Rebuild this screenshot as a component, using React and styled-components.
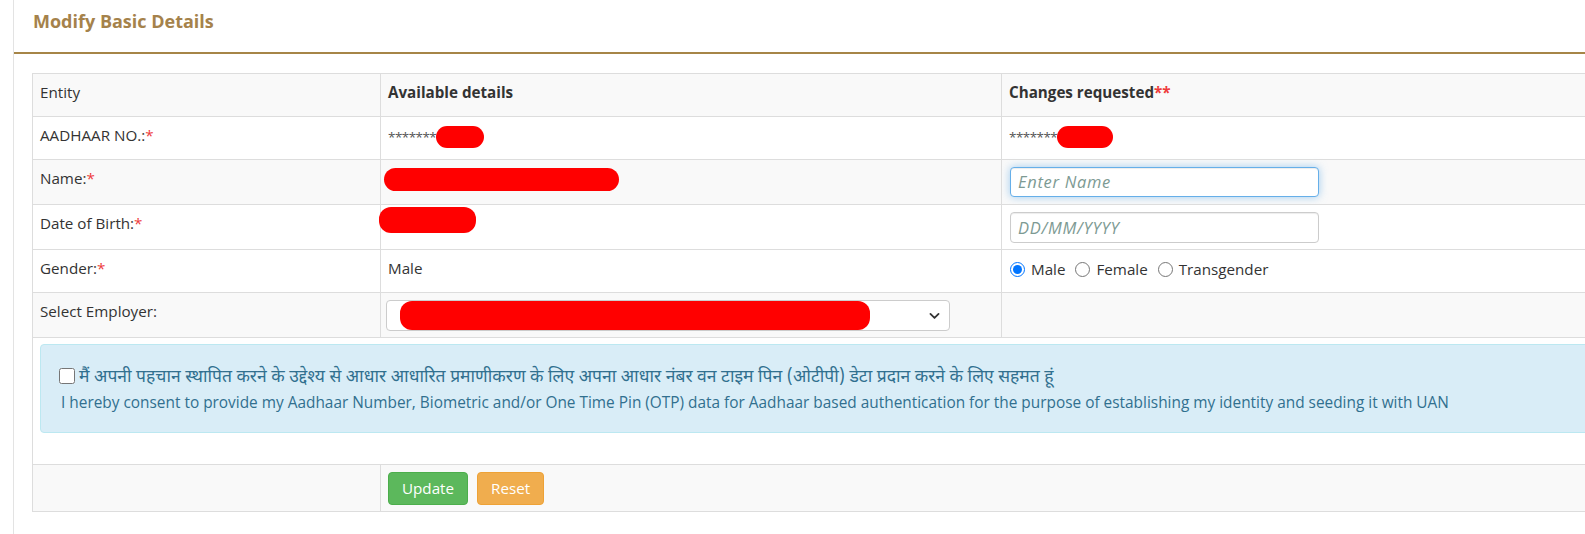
import React from 'react';
import styled, { createGlobalStyle } from 'styled-components';

const GlobalStyle = createGlobalStyle`
  body {
    margin: 0;
    background: #fff;
    font-family: "Open Sans", "Noto Sans", sans-serif;
    color: #333;
    overflow: hidden;
  }
`;

const Panel = styled.div`
  margin-left: 13px;
  min-height: 534px;
  border-left: 1px solid #e3e3e3;
`;

const PanelHeading = styled.div`
  height: 54px;
  box-sizing: border-box;
  padding: 9px 19px;
  border-bottom: 2px solid #a68547;
  color: #a5824b;
  font-size: 18px;
  font-weight: 700;
  line-height: 24px;
`;

const PanelBody = styled.div`
  padding: 19px 0 0 18px;
`;

const Table = styled.table`
  width: 1620px;
  table-layout: fixed;
  border-collapse: collapse;
  border: 1px solid #ddd;
  font-size: 15.2px;
`;

const Col = styled.col`
  width: ${p => p.$w}px;
`;

const Row = styled.tr`
  height: ${p => p.$h}px;
  background: ${p => (p.$shade ? '#f9f9f9' : '#fff')};
`;

const Cell = styled.td`
  border: 1px solid #ddd;
  padding: 7px 7px 0;
  line-height: 22px;
  vertical-align: top;
  font-weight: ${p => (p.$head ? 700 : 400)};
`;

const Req = styled.span`
  color: #ee3b3b;
`;

const Stars = styled.span`
  font-size: 13.4px;
  color: #555;
  letter-spacing: -0.5px;
  vertical-align: middle;
`;

const Redact = styled.span`
  display: inline-block;
  vertical-align: middle;
  width: ${p => p.$w}px;
  height: ${p => p.$h}px;
  margin-left: ${p => p.$dx || 0}px;
  position: relative;
  top: ${p => p.$dy || 0}px;
  background: #ff0000;
  border-radius: 12px;
`;

const TextInput = styled.input`
  display: block;
  box-sizing: border-box;
  width: 309px;
  height: ${p => p.$h || 30}px;
  margin: 0 0 0 1px;
  padding: 4px 7px;
  font-family: inherit;
  font-size: 15.2px;
  color: #555;
  border: 1px solid ${p => (p.$focus ? '#66afe9' : '#ccc')};
  border-radius: 4px;
  box-shadow: ${p => (p.$focus
    ? 'inset 0 1px 1px rgba(0,0,0,.075), 0 0 8px rgba(102,175,233,.6)'
    : 'inset 0 1px 1px rgba(0,0,0,.075)')};
  outline: none;

  &::placeholder {
    color: #7d9a93;
    font-style: italic;
    font-size: 16.5px;
    letter-spacing: 0.7px;
  }
`;

const RadioGroup = styled.div`
  display: flex;
  align-items: center;
  gap: 10px;
  padding: 1px 0 0 1px;
`;

const RadioLabel = styled.label`
  display: inline-flex;
  align-items: center;
  gap: 6px;
`;

const Radio = styled.input`
  margin: 0;
  width: 15px;
  height: 15px;
  accent-color: #0075ff;
`;

const SelectBox = styled.div`
  box-sizing: border-box;
  width: 564px;
  height: 31px;
  margin-left: -2px;
  border: 1px solid #ccc;
  border-radius: 4px;
  background: #fff;
  display: flex;
  align-items: center;
  justify-content: space-between;
  padding: 0 8px 0 13px;
`;

const Alert = styled.div`
  margin: -1px 0 31px;
  padding: 15px 15px 18px;
  background: #d9edf7;
  border: 1px solid #bce8f1;
  border-radius: 4px;
  color: #31708f;
`;

const ConsentLine = styled.label`
  display: flex;
  align-items: center;
  font-family: "Noto Sans Devanagari", "Lohit Devanagari", "Noto Sans", sans-serif;
  font-size: 17.5px;
  line-height: 32px;
`;

const HindiText = styled.span`
  line-height: 28px;
  padding-top: 4px;
`;

const Check = styled.input`
  margin: 0 4px 0 3px;
  width: 16px;
  height: 16px;
`;

const ConsentText = styled.div`
  padding-left: 5px;
  font-size: 15.4px;
  line-height: 22px;
`;

const ButtonRow = styled.div`
  display: flex;
  gap: 9px;
`;

const Button = styled.button`
  font-family: inherit;
  font-size: 15.2px;
  line-height: 19px;
  padding: 6px 13px;
  color: #fff;
  border-radius: 4px;
  border: 1px solid ${p => (p.$variant === 'warning' ? '#eea236' : '#4cae4c')};
  background: ${p => (p.$variant === 'warning' ? '#f0ad4e' : '#5cb85c')};
  cursor: pointer;
`;

const Chevron = () => (
  <svg width="13" height="13" viewBox="0 0 16 16" fill="none" stroke="#333" strokeWidth="2.2" strokeLinecap="round" strokeLinejoin="round">
    <path d="M3 6l5 5 5-5" />
  </svg>
);

export default function App() {
  return (
    <>
      <GlobalStyle />
      <Panel>
        <PanelHeading>Modify Basic Details</PanelHeading>
        <PanelBody>
          <Table>
            <colgroup>
              <Col $w={348} />
              <Col $w={621} />
              <Col $w={651} />
            </colgroup>
            <tbody>
              <Row $h={43} $shade>
                <Cell>Entity</Cell>
                <Cell $head>Available details</Cell>
                <Cell $head>Changes requested<Req>**</Req></Cell>
              </Row>
              <Row $h={43}>
                <Cell>AADHAAR NO.:<Req>*</Req></Cell>
                <Cell><Stars>*******</Stars><Redact $w={48} $h={22} /></Cell>
                <Cell><Stars>*******</Stars><Redact $w={56} $h={22} /></Cell>
              </Row>
              <Row $h={45} $shade>
                <Cell>Name:<Req>*</Req></Cell>
                <Cell><Redact $w={235} $h={23} $dx={-4} /></Cell>
                <Cell><TextInput $focus placeholder="Enter Name" /></Cell>
              </Row>
              <Row $h={45}>
                <Cell>Date of Birth:<Req>*</Req></Cell>
                <Cell><Redact $w={97} $h={26} $dx={-9} $dy={-5} /></Cell>
                <Cell><TextInput $h={31} placeholder="DD/MM/YYYY" /></Cell>
              </Row>
              <Row $h={43}>
                <Cell>Gender:<Req>*</Req></Cell>
                <Cell>Male</Cell>
                <Cell>
                  <RadioGroup>
                    <RadioLabel><Radio type="radio" name="g" defaultChecked />Male</RadioLabel>
                    <RadioLabel><Radio type="radio" name="g" />Female</RadioLabel>
                    <RadioLabel><Radio type="radio" name="g" />Transgender</RadioLabel>
                  </RadioGroup>
                </Cell>
              </Row>
              <Row $h={45} $shade>
                <Cell>Select Employer:</Cell>
                <Cell>
                  <SelectBox>
                    <Redact $w={470} $h={29} />
                    <Chevron />
                  </SelectBox>
                </Cell>
                <Cell />
              </Row>
              <Row>
                <Cell colSpan={3}>
                  <Alert>
                    <ConsentLine>
                      <Check type="checkbox" />
                      <HindiText>
                        मैं अपनी पहचान स्थापित करने के उद्देश्य से आधार आधारित प्रमाणीकरण के लिए अपना आधार नंबर वन टाइम पिन (ओटीपी) डेटा प्रदान करने के लिए सहमत हूं
                      </HindiText>
                    </ConsentLine>
                    <ConsentText>
                      I hereby consent to provide my Aadhaar Number, Biometric and/or One Time Pin (OTP) data for Aadhaar based authentication for the purpose of establishing my identity and seeding it with UAN
                    </ConsentText>
                  </Alert>
                </Cell>
              </Row>
              <Row $h={47} $shade>
                <Cell />
                <Cell colSpan={2}>
                  <ButtonRow>
                    <Button>Update</Button>
                    <Button $variant="warning">Reset</Button>
                  </ButtonRow>
                </Cell>
              </Row>
            </tbody>
          </Table>
        </PanelBody>
      </Panel>
    </>
  );
}
